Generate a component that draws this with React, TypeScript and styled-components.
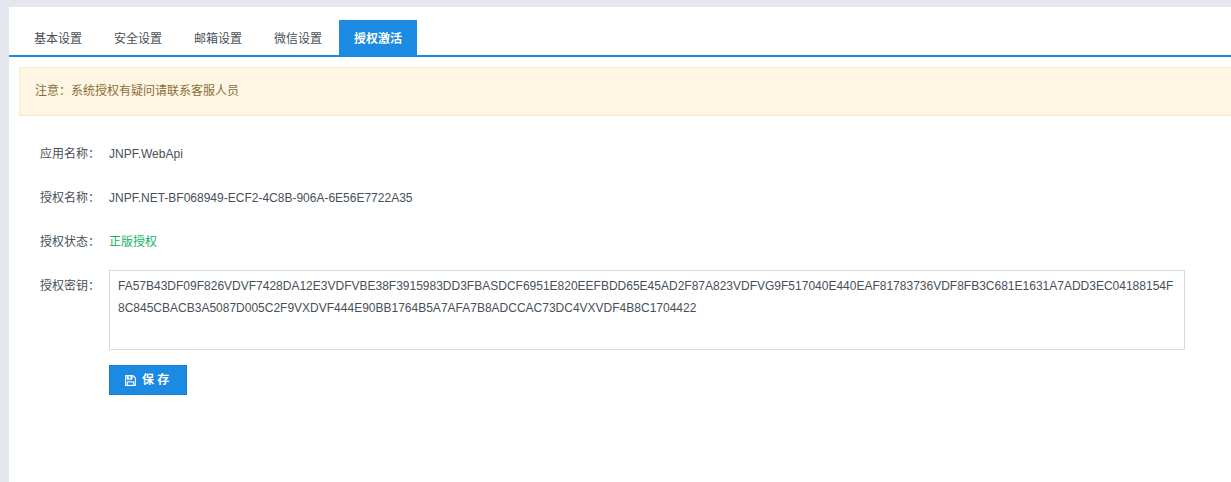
import React, { useState } from "react";
import styled, { createGlobalStyle } from "styled-components";

const GlobalStyle = createGlobalStyle`
  *, *::before, *::after { box-sizing: border-box; }
  body {
    margin: 0;
    background: #e4e7ef;
    color: #475059;
    font: 12px/22px "Liberation Sans", "Noto Sans CJK SC", sans-serif;
  }
  button, textarea { font: inherit; color: inherit; }
`;

const Page = styled.div`
  display: flex;
  flex-direction: column;
  min-height: 100vh;
  padding: 7px 0 0 9px;
`;

const Panel = styled.main`
  flex: 1;
  background: #fff;
  padding-top: 13px;
`;

const TabBar = styled.div`
  display: flex;
  gap: 2px;
  padding: 0 10px;
  border-bottom: 2px solid #1a8ae2;
`;

const Tab = styled.button<{ $active: boolean }>`
  height: 35px;
  padding: 2px 15px 0;
  border: 0;
  cursor: pointer;
  background: ${(p) => (p.$active ? "#1a8ae2" : "transparent")};
  color: ${(p) => (p.$active ? "#fff" : "inherit")};
  font-weight: ${(p) => (p.$active ? 700 : 400)};
`;

const Notice = styled.p`
  margin: 10px 0 0 10px;
  padding: 12px 15px 13px;
  border: 1px solid #f5eacb;
  border-right: 0;
  background: #fef6e2;
  color: #8a6d3b;
`;

const Form = styled.form`
  display: grid;
  grid-template-columns: 60px 1fr;
  column-gap: 9px;
  row-gap: 22px;
  padding: 27px 46px 20px 31px;
`;

const Label = styled.label`
  white-space: nowrap;
`;

const Value = styled.output<{ $ok?: boolean }>`
  color: ${(p) => (p.$ok ? "#12b368" : "inherit")};
`;

const Field = styled.div`
  display: flex;
  flex-direction: column;
  align-items: flex-start;
  gap: 15px;
  margin-top: -5px;
`;

const KeyInput = styled.textarea`
  display: block;
  width: 100%;
  height: 80px;
  padding: 4px 8px;
  border: 1px solid #d9d9d9;
  border-radius: 0;
  background: #fff;
  outline: 0;
  resize: none;
  word-break: break-all;
`;

const SaveButton = styled.button`
  display: flex;
  align-items: center;
  gap: 6px;
  min-width: 78px;
  height: 30px;
  padding: 0 15px;
  border: 1px solid #1a7dcb;
  background: #1a8ae2;
  color: #fff;
  font-weight: 700;
  cursor: pointer;
`;

const SaveIcon = () => (
  <svg width="11" height="11" viewBox="128 128 1536 1536" fill="currentColor" stroke="currentColor" strokeWidth="50" aria-hidden="true">
    <path d="M512 1536h768v-384h-768v384zM1408 1536h128v-896q0-14-10-38.5t-20-34.5l-281-281q-10-10-34-20t-39-10v416q0 40-28 68t-68 28h-576q-40 0-68-28t-28-68v-416h-128v1280h128v-416q0-40 28-68t68-28h832q40 0 68 28t28 68v416zM896 608v-320q0-13-9.5-22.5t-22.5-9.5h-192q-13 0-22.5 9.5t-9.5 22.5v320q0 13 9.5 22.5t22.5 9.5h192q13 0 22.5-9.5t9.5-22.5zM1664 640v928q0 40-28 68t-68 28h-1344q-40 0-68-28t-28-68v-1344q0-40 28-68t68-28h928q40 0 88 20t76 48l280 280q28 28 48 76t20 88z" />
  </svg>
);

const TABS = ["基本设置", "安全设置", "邮箱设置", "微信设置", "授权激活"];

const LICENSE_KEY =
  "FA57B43DF09F826VDVF7428DA12E3VDFVBE38F3915983DD3FBASDCF6951E820EEFBDD65E45AD2F87A823VDFVG9F517040E440EAF81783736VDF8FB3C681E1631A7ADD3EC04188154F8C845CBACB3A5087D005C2F9VXDVF444E90BB1764B5A7AFA7B8ADCCAC73DC4VXVDF4B8C1704422";

export default function App() {
  const [active, setActive] = useState("授权激活");
  const [licenseKey, setLicenseKey] = useState(LICENSE_KEY);

  return (
    <Page>
      <GlobalStyle />
      <Panel>
        <TabBar role="tablist">
          {TABS.map((name) => (
            <Tab
              key={name}
              type="button"
              role="tab"
              aria-selected={name === active}
              $active={name === active}
              onClick={() => setActive(name)}
            >
              {name}
            </Tab>
          ))}
        </TabBar>
        <Notice>注意：系统授权有疑问请联系客服人员</Notice>
        <Form onSubmit={(e) => e.preventDefault()}>
          <Label htmlFor="appName">应用名称：</Label>
          <Value id="appName">JNPF.WebApi</Value>
          <Label htmlFor="licenseName">授权名称：</Label>
          <Value id="licenseName">JNPF.NET-BF068949-ECF2-4C8B-906A-6E56E7722A35</Value>
          <Label htmlFor="licenseState">授权状态：</Label>
          <Value id="licenseState" $ok>正版授权</Value>
          <Label htmlFor="licenseKey">授权密钥：</Label>
          <Field>
            <KeyInput
              id="licenseKey"
              spellCheck={false}
              value={licenseKey}
              onChange={(e) => setLicenseKey(e.target.value)}
            />
            <SaveButton type="submit">
              <SaveIcon />
              <span>保 存</span>
            </SaveButton>
          </Field>
        </Form>
      </Panel>
    </Page>
  );
}
